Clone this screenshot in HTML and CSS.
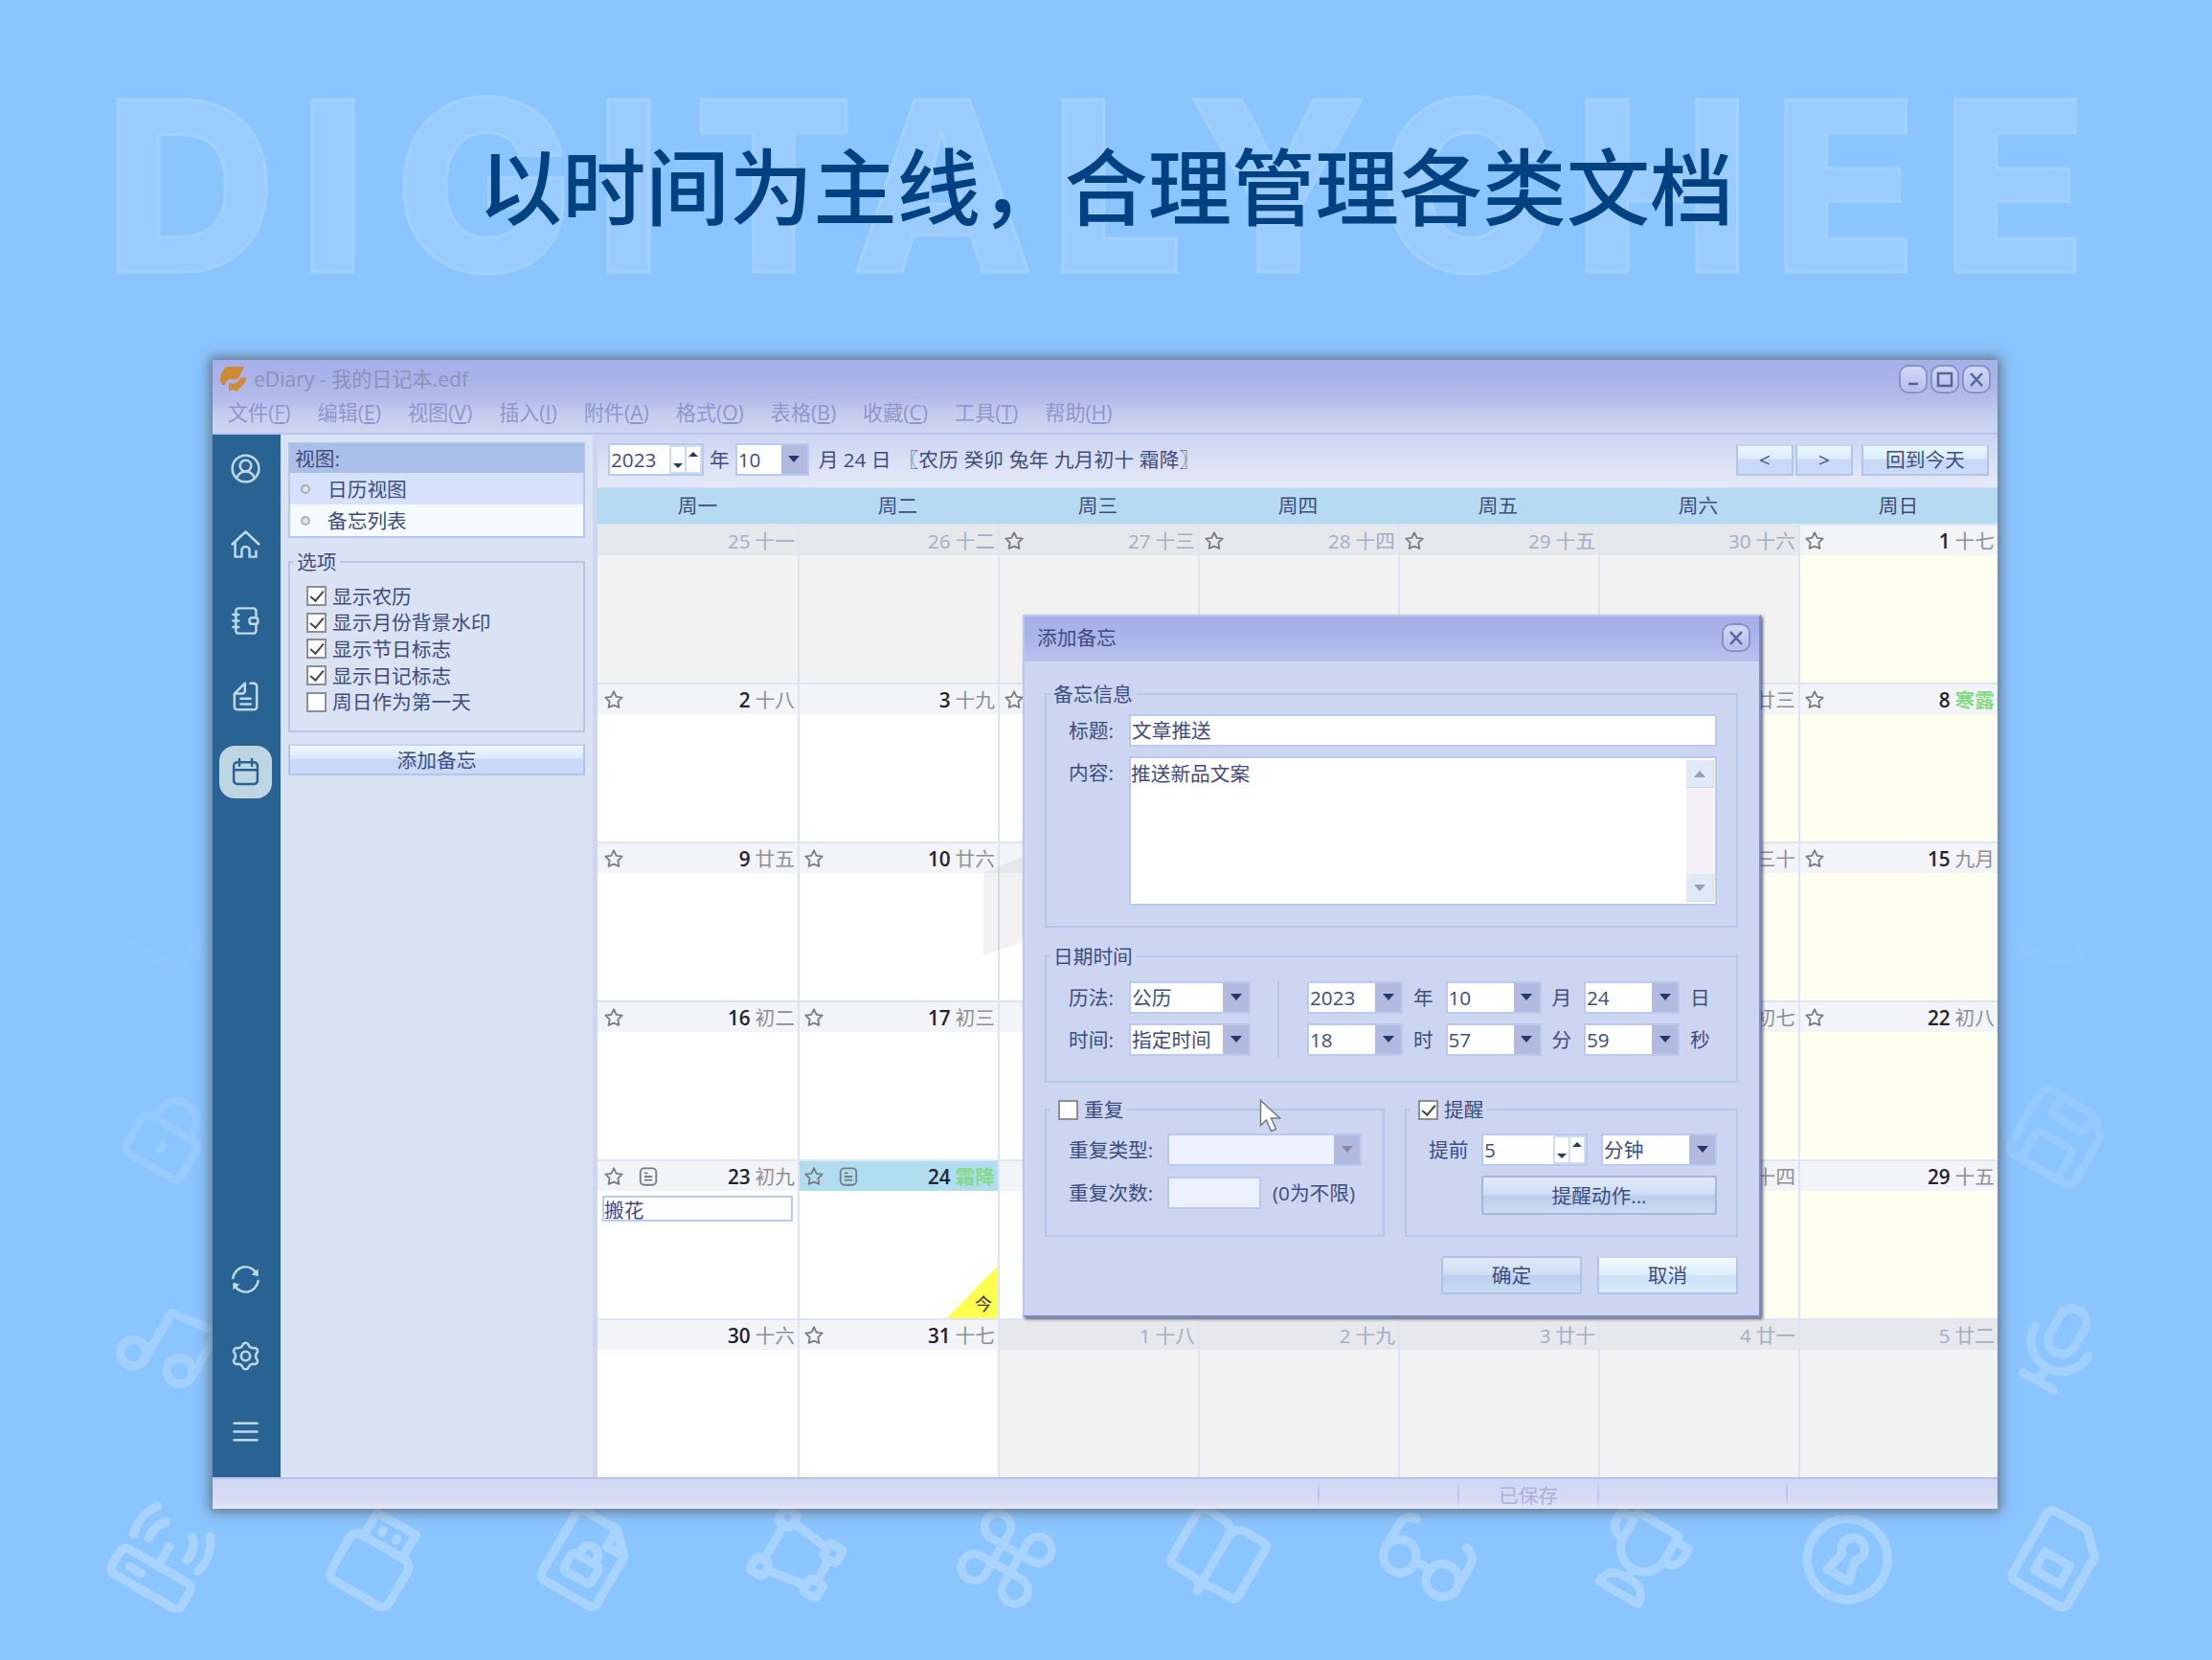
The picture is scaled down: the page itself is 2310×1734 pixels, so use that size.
FILE: index.html
```html
<!DOCTYPE html>
<html lang="zh-CN">
<head>
    <meta charset="UTF-8">
    <meta name="viewport" content="width=device-width, initial-scale=1.0">
    <title>eDiary - 我的日记本.edf</title>
    <link rel="stylesheet" href="styles.css">
</head>
<body>
    <!-- 背景大字 -->
    <svg class="backword" viewBox="0 0 2310 330" aria-hidden="true">
        <text y="284" x="109 312 412 621 724 889 1096 1241 1440 1643 1851 2028">DIGITALYCHEE</text>
    </svg>

    <!-- 背景图标 -->
    <div class="decor">
        <svg class="c1 r1" viewBox="-1 0 26 26"><rect x="4" y="5" width="16" height="15.5" rx="2"/></svg>
        <svg class="c10 r1" viewBox="0 0 24 24"><path d="M4.500 12v4.500a3 3 0 0 0 3 3c5 0 9-1 11.500-5V5"/></svg>
        <svg class="c1 r2" viewBox="-1.5 -.6 27 27"><rect x="4" y="10" width="16" height="11" rx="2"/><path d="M7 10V8a5 5 0 0 1 10 0v2M12 14.800v1.400"/></svg>
        <svg class="c10 r2" viewBox="-1 -.6 26 26"><path d="M5 3h12l4 4v12a2 2 0 0 1-2 2H5a2 2 0 0 1-2-2V5a2 2 0 0 1 2-2zM8 3v4a1 1 0 0 0 1 1h7a1 1 0 0 0 1-1V3M7 21v-7a1 1 0 0 1 1-1h8a1 1 0 0 1 1 1v7"/></svg>
        <svg class="c1 r3" viewBox="0 0 24 24"><circle cx="6" cy="16.500" r="2.900"/><circle cx="17" cy="14.800" r="2.900"/><path d="M8.900 16.500V4.500L20 3v12"/></svg>
        <svg class="c10 r3" viewBox="-.3 .4 24.5 24.5"><rect x="8.800" y="2.500" width="6.400" height="11" rx="3.200"/><path d="M5 10.500a7 7 0 0 0 14 0M12 17.500v3.500M8 21.200h8"/></svg>

        <svg class="c1 r4" viewBox=".8 -.4 24 24"><rect x="3" y="14" width="18" height="6.500" rx="1.500"/><path d="M6.500 17.300h3M12 14V9M5.200 2.500A9 9 0 0 0 3.700 10.500M8.600 4.600a5.500 5.500 0 0 0-1.500 5M18.800 2.500a9 9 0 0 1 1.500 8M15.400 4.600a5.500 5.500 0 0 1 1.500 5"/></svg>
        <svg class="c2 r4" viewBox="0 0 24 24"><rect x="4.500" y="9" width="15" height="12" rx="2"/><path d="M7 9V3h10v6M10.200 5.800v.5M13.800 5.800v.5"/></svg>
        <svg class="c3 r4" viewBox="0 0 24 24"><path d="M6.300 3H14.500l4.500 4.500V19.500a1.500 1.500 0 0 1-1.500 1.500H6.300a1.500 1.500 0 0 1-1.500-1.500V4.500A1.500 1.500 0 0 1 6.300 3zM14.500 3v4.500H19"/><rect x="8.500" y="12.300" width="7" height="4.500" rx=".8"/><path d="M10 12v-1a2 2 0 0 1 4 0v1"/></svg>
        <svg class="c4 r4" viewBox="0.2 0.2 24 24"><path d="M7.800 5.600l9 1.200M18.600 9v5M7.800 17.800l9-1.400M6 7.500v8.400"/><rect x="4.200" y="3.600" width="3.400" height="3.400" rx=".6"/><rect x="17" y="5.400" width="3.400" height="3.400" rx=".6"/><rect x="17" y="14.400" width="3.400" height="3.400" rx=".6"/><rect x="4.200" y="16.200" width="3.400" height="3.400" rx=".6"/></svg>
        <svg class="c5 r4" viewBox="-1 -1 26 26"><path d="M9.500 9.500h5v5h-5zM9.500 9.500H6.300a3.200 3.200 0 1 1 3.200-3.200zM14.500 9.500V6.300a3.200 3.200 0 1 1 3.200 3.200zM14.500 14.500h3.200a3.200 3.200 0 1 1-3.200 3.200zM9.500 14.500v3.200a3.200 3.200 0 1 1-3.200-3.200z"/></svg>
        <svg class="c6 r4" viewBox="-.4 -.2 25 25"><path d="M12 21V6.500C12 4.500 10.500 3.500 8.500 3.500H4a1 1 0 0 0-1 1V17.500a1 1 0 0 0 1 1h4.500c2 0 3.500.7 3.500 2.500 0-1.800 1.500-2.500 3.500-2.500H20a1 1 0 0 0 1-1V4.500a1 1 0 0 0-1-1h-4.500c-2 0-3.500 1-3.500 3"/></svg>
        <svg class="c7 r4" viewBox="0 0 24 24"><circle cx="6.500" cy="14.500" r="3.700"/><circle cx="17.500" cy="14.500" r="3.700"/><path d="M2.800 14.500V8.500A3 3 0 0 1 5.500 5.500M21.200 14.500V8.500A3 3 0 0 0 18.500 5.500M10.300 13.800h3.400"/></svg>
        <svg class="c8 r4" viewBox="-.9 0 25 25"><path d="M6.500 3h11v6.500a5.500 5.500 0 0 1-11 0zM6.500 4.500H3V7a3 3 0 0 0 3.500 3M17.500 4.500H21V7a3 3 0 0 1-3.500 3M12 15v2.500M6.800 21.500c0-2.500 1.700-4 4-4h2.400c2.300 0 4 1.500 4 4z"/></svg>
        <svg class="c9 r4" viewBox="-.3 0 24 24"><circle cx="12" cy="12" r="9"/><path d="M10.400 11.500a2.600 2.600 0 1 1 3.200 0l1.200 4.700H9.200z"/></svg>
        <svg class="c10 r4" viewBox="-.2 0 24 24"><path d="M6.300 3H14.500l4.500 4.500V19.500a1.500 1.500 0 0 1-1.500 1.500H6.300a1.500 1.500 0 0 1-1.500-1.500V4.500A1.500 1.500 0 0 1 6.300 3z"/><rect x="8.700" y="12" width="6.500" height="4.700"/></svg>
    </div>

    <h1>以时间为主线，合理管理各类文档</h1>

    <div class="window">
        <div class="window-head">
            <div class="titlebar">
                <svg class="logo" viewBox="0 0 28 28"><path d="M8 1h18l-6 12c-2 2-5 1-8 1-3 0-5 1-6 6L3 20C-1 15 1 6 8 1zM28 12c0 8-7 9-9 15l-5-2-4 2V18c6 2 9 0 12-5z"/></svg>
                <span class="title">eDiary - 我的日记本.edf</span>
                <div class="win-buttons">
                    <span class="win-btn"><svg viewBox="0 0 30 30"><path d="M10 20h10"/></svg></span>
                    <span class="win-btn"><svg viewBox="0 0 30 30"><path d="M8 9h14v13H8z"/></svg></span>
                    <span class="win-btn"><svg viewBox="0 0 30 30"><path d="M9 9l12 13M21 9L9 22"/></svg></span>
                </div>
            </div>
            <div class="menubar">
                <span>文件(<u>F</u>)</span>
                <span>编辑(<u>E</u>)</span>
                <span>视图(<u>V</u>)</span>
                <span>插入(<u>I</u>)</span>
                <span>附件(<u>A</u>)</span>
                <span>格式(<u>O</u>)</span>
                <span>表格(<u>B</u>)</span>
                <span>收藏(<u>C</u>)</span>
                <span>工具(<u>T</u>)</span>
                <span>帮助(<u>H</u>)</span>
            </div>
        </div>

        <div class="window-body">
            <div class="rail">
                <div class="rail-item"><svg viewBox="0 0 24 24"><circle cx="12" cy="12" r="9.500"/><circle cx="12" cy="10" r="4"/><path d="M5.500 18.500c1.500-3 4-4.500 6.500-4.500s5 1.500 6.500 4.500"/></svg></div>
                <div class="rail-item"><svg viewBox="0 0 24 24"><path d="M2.500 12L12 3l9.500 9M4.500 10.500V21h4.700v-4.500a2.800 2.800 0 0 1 5.600 0V21h4.700v-4"/></svg></div>
                <div class="rail-item"><svg viewBox="0 0 24 24"><path d="M19.500 9V5a2 2 0 0 0-2-2H7a2 2 0 0 0-2 2v14a2 2 0 0 0 2 2h10.500a2 2 0 0 0 2-2v-4M3 7.500h4M3 12h4M3 16.500h4"/><rect x="14.800" y="9.700" width="6" height="4.600" rx="1.800"/></svg></div>
                <div class="rail-item"><svg viewBox="0 0 24 24"><path d="M15.500 2.500h2.300a2.200 2.200 0 0 1 2.200 2.200v14.600a2.200 2.200 0 0 1-2.200 2.200H6.200A2.200 2.200 0 0 1 4 19.300V10l7.500-7.500V8a2 2 0 0 1-2 2H4M8.500 13.500h7M8.500 17.500h7"/></svg></div>
                <div class="rail-item active"><svg viewBox="0 0 24 24"><rect x="3.500" y="5" width="17" height="15.500" rx="2.500"/><path d="M3.500 10.500h17M7.500 2.800v4.500M16.500 2.800v4.500"/></svg></div>
                <div class="rail-space"></div>
                <div class="rail-item"><svg viewBox="0 0 24 24"><path d="M3 11a9 9 0 0 1 17-3M21 13a9 9 0 0 1-17 3"/><path class="solid" d="M21 4.500v5.300l-4.800-1.300zM3 19.500v-5.300l4.800 1.300z"/></svg></div>
                <div class="rail-item"><svg viewBox="0 0 24 24"><circle cx="12" cy="12" r="3.200"/><path d="M10.300 3.300a2.200 2.200 0 0 1 3.400 0Q15 6.800 18.700 6.200a2.200 2.200 0 0 1 1.700 2.900Q18 12 20.400 14.900a2.200 2.200 0 0 1-1.700 2.900Q15 17.200 13.700 20.700a2.200 2.200 0 0 1-3.400 0Q9 17.200 5.300 17.800a2.200 2.200 0 0 1-1.700-2.900Q6 12 3.600 9.100a2.200 2.200 0 0 1 1.700-2.900Q9 6.800 10.300 3.300z"/></svg></div>
                <div class="rail-item"><svg viewBox="0 0 24 24"><path d="M3.800 6h16.400M3.800 12h16.400M3.800 18h16.400"/></svg></div>
            </div>

            <div class="sidebar">
                <div class="view-list">
                    <div class="view-title">视图:</div>
                    <div class="view-item selected"><i></i>日历视图</div>
                    <div class="view-item"><i></i>备忘列表</div>
                </div>
                <fieldset class="options">
                    <legend>选项</legend>
                    <div class="check"><span class="box on"></span>显示农历</div>
                    <div class="check"><span class="box on"></span>显示月份背景水印</div>
                    <div class="check"><span class="box on"></span>显示节日标志</div>
                    <div class="check"><span class="box on"></span>显示日记标志</div>
                    <div class="check"><span class="box"></span>周日作为第一天</div>
                </fieldset>
                <div class="btn">添加备忘</div>
            </div>

            <div class="main">
                <div class="toolbar">
                    <div class="spin w-year"><span>2023</span><b><i class="down"></i><i class="up"></i></b></div>
                    <span class="unit-year">年</span>
                    <div class="combo w-month"><span>10</span><b></b></div>
                    <span class="date-text">月 24 日</span>
                    <span class="lunar-text">〖农历 癸卯 兔年 九月初十 霜降〗</span>
                    <div class="nav">
                        <div class="btn">&lt;</div>
                        <div class="btn">&gt;</div>
                        <div class="btn today-btn">回到今天</div>
                    </div>
                </div>
                <div class="weekdays">
                    <span>周一</span><span>周二</span><span>周三</span><span>周四</span><span>周五</span><span>周六</span><span>周日</span>
                </div>
                <div class="days" id="days"></div>
                <!-- 月份水印 -->
                <svg class="watermark" viewBox="0 0 60 104"><path d="M0 17L60-8V81L0 104z"/></svg>
            </div>
        </div>

        <div class="statusbar">
            <span class="s1"></span><span class="s2"></span><span class="s3">已保存</span><span class="s4"></span><span class="s5"></span>
        </div>

        <!-- 添加备忘对话框 -->
        <div class="dialog">
            <div class="dialog-title">
                <span>添加备忘</span>
                <span class="win-btn"><svg viewBox="0 0 30 30"><path d="M9 9l12 13M21 9L9 22"/></svg></span>
            </div>
            <div class="dialog-body">
                <fieldset class="info">
                    <legend>备忘信息</legend>
                    <div class="row"><label>标题:</label><div class="text-input">文章推送</div></div>
                    <div class="row top"><label>内容:</label>
                        <div class="textarea"><span>推送新品文案</span>
                            <div class="scroll"><b class="up"></b><b class="down"></b></div>
                        </div>
                    </div>
                </fieldset>
                <fieldset class="datetime">
                    <legend>日期时间</legend>
                    <div class="kind">
                        <div class="row"><label>历法:</label><div class="combo w-kind"><span>公历</span><b></b></div></div>
                        <div class="row"><label>时间:</label><div class="combo w-kind"><span>指定时间</span><b></b></div></div>
                    </div>
                    <div class="values">
                        <div class="combo"><span>2023</span><b></b></div><em>年</em>
                        <div class="combo"><span>10</span><b></b></div><em>月</em>
                        <div class="combo"><span>24</span><b></b></div><em>日</em>
                        <div class="combo"><span>18</span><b></b></div><em>时</em>
                        <div class="combo"><span>57</span><b></b></div><em>分</em>
                        <div class="combo"><span>59</span><b></b></div><em>秒</em>
                    </div>
                </fieldset>
                <div class="pair">
                    <fieldset class="repeat">
                        <legend><span class="box"></span>重复</legend>
                        <div class="row"><label>重复类型:</label><div class="combo disabled w-type"><span></span><b></b></div></div>
                        <div class="row"><label>重复次数:</label><div class="text-input disabled w-times"></div><span class="hint">(0为不限)</span></div>
                    </fieldset>
                    <fieldset class="remind">
                        <legend><span class="box on"></span>提醒</legend>
                        <div class="row"><label>提前</label><div class="spin w-ahead"><span>5</span><b><i class="down"></i><i class="up"></i></b></div><div class="combo w-unit"><span>分钟</span><b></b></div></div>
                        <div class="btn action">提醒动作...</div>
                    </fieldset>
                </div>
                <div class="dialog-buttons">
                    <div class="btn ok">确定</div>
                    <div class="btn cancel">取消</div>
                </div>
            </div>
            <svg class="cursor" viewBox="0 0 24 36"><path d="M1.500 1.500v26l6-5.500 5 11.500 5-2-5-11.500h9z"/></svg>
        </div>
    </div>

    <script>
        // 每个格子: 日期, 农历, 标志 (s - 星标, n - 日记, x - 非本月, w - 周末, t - 今天, g - 节气)
        const days = [
            [25, "十一", "x"], [26, "十二", "x"], [27, "十三", "xs"], [28, "十四", "xs"], [29, "十五", "xs"], [30, "十六", "x"], [1, "十七", "ws"],
            [2, "十八", "s"], [3, "十九", ""], ["", "", "s"], ["", "", ""], ["", "", ""], ["", "廿三", "w"], [8, "寒露", "wsg"],
            [9, "廿五", "s"], [10, "廿六", "s"], ["", "", ""], ["", "", ""], ["", "", ""], ["", "三十", "w"], [15, "九月", "ws"],
            [16, "初二", "s"], [17, "初三", "s"], ["", "", ""], ["", "", ""], ["", "", ""], ["", "初七", "w"], [22, "初八", "ws"],
            [23, "初九", "sn"], [24, "霜降", "sntg"], ["", "", ""], ["", "", ""], ["", "", ""], ["", "十四", "w"], [29, "十五", "w"],
            [30, "十六", ""], [31, "十七", "s"], [1, "十八", "x"], [2, "十九", "x"], [3, "廿十", "x"], [4, "廿一", "x"], [5, "廿二", "x"]
        ];
        const memos = { 28: "搬花" };
        const star = '<svg viewBox="0 0 24 24"><path d="M12 2.500l2.900 6 6.600.9-4.800 4.600 1.200 6.600-5.900-2.400-5.900 2.400 1.200-6.600L2.500 9.400l6.600-.9z"/></svg>';
        const note = '<svg class="note" viewBox="0 0 24 24"><rect x="3" y="2.500" width="18" height="19" rx="4.500"/><path d="M7.500 8h4M7.500 12h9M7.500 16h9"/></svg>';

        document.getElementById("days").innerHTML = days.map(function (d, i) {
            const f = d[2];
            let cls = "day";
            if (f.includes("x")) cls += " other";
            if (f.includes("w")) cls += " weekend";
            if (f.includes("t")) cls += " today";
            if (f.includes("g")) cls += " term";
            return '<div class="' + cls + '"><div class="day-head">' +
                (f.includes("s") ? star : "") + (f.includes("n") ? note : "") +
                '<span class="num">' + d[0] + '</span><span class="lunar">' + d[1] + '</span></div>' +
                (memos[i] ? '<div class="memo">' + memos[i] + '</div>' : "") +
                (f.includes("t") ? '<div class="corner">今</div>' : "") + '</div>';
        }).join("");
    </script>
</body>
</html>
```
FILE: styles.css
```css
* {
    box-sizing: border-box;
}
body {
    margin: 0;
    width: 2310px;
    height: 1734px;
    position: relative;
    overflow: hidden;
    background: #8bc5ff;
    font-family: "Open Sans", "Noto Sans CJK SC", sans-serif;
    font-size: 20.7px;
    line-height: 28px;
    color: #3f4d7d;
    white-space: nowrap;
}
h1 {
    margin: 0;
    padding-top: 128px;
    height: 376px;
    text-align: center;
    font-family: "Noto Sans CJK SC", sans-serif;
    font-size: 87.400px;
    font-weight: 500;
    line-height: 126px;
    color: #004182;
    position: relative;
}

/* background */
.backword {
    position: absolute;
    left: 0;
    top: 0;
    width: 2310px;
    height: 330px;
}
.backword text {
    font-family: Inter, sans-serif;
    font-weight: 800;
    font-size: 248px;
    fill: #9accff;
    stroke: #a3d1ff;
    stroke-width: 3px;
}
.decor {
    position: absolute;
    left: 88px;
    top: 914px;
    padding: 0 30px;
    display: grid;
    grid-template-columns: repeat(10, 112px);
    grid-template-rows: repeat(4, 112px);
    gap: 107.300px;
    -webkit-mask-image: linear-gradient(transparent 7.500%, rgba(0, 0, 0, .1) 7.600%, rgba(0, 0, 0, .4) 36%, rgba(0, 0, 0, .75) 64%, #000 86%);
    mask-image: linear-gradient(transparent 7.500%, rgba(0, 0, 0, .1) 7.600%, rgba(0, 0, 0, .4) 36%, rgba(0, 0, 0, .75) 64%, #000 86%);
}
.decor svg {
    width: 112px;
    height: 112px;
    overflow: visible;
    transform: rotate(30deg);
    fill: none;
    stroke: #a8d3ff;
    stroke-width: 2;
    stroke-linecap: round;
    stroke-linejoin: round;
}
.c1 { grid-column: 1; }
.c2 { grid-column: 2; }
.c3 { grid-column: 3; }
.c4 { grid-column: 4; }
.c5 { grid-column: 5; }
.c6 { grid-column: 6; }
.c7 { grid-column: 7; }
.c8 { grid-column: 8; }
.c9 { grid-column: 9; }
.c10 { grid-column: 10; }
.r1 { grid-row: 1; }
.r2 { grid-row: 2; }
.r3 { grid-row: 3; }
.r4 { grid-row: 4; }

/* window */
.window {
    position: relative;
    width: 1864px;
    height: 1200px;
    margin-left: 222px;
    display: flex;
    flex-direction: column;
    background: #ccd6f1;
    box-shadow: 0 0 12px 3px rgba(80, 80, 80, .7);
}
.window-head {
    flex: none;
    height: 78px;
    border-bottom: 2px solid #b3c3ec;
    background: linear-gradient(#a6afe8 0, #a9b3e9 25%, #b4bdeb 55%, #c5ceee 75%, #cdd6f1 100%);
}
.titlebar {
    height: 40px;
    padding: 0 7px 0 7px;
    display: flex;
    align-items: center;
}
.logo {
    width: 28px;
    height: 28px;
    fill: #d08a36;
}
.title {
    flex: 1;
    margin-left: 8px;
    font-size: 21.100px;
    color: #8d94b8;
}
.win-buttons {
    display: flex;
    gap: 3px;
}
.win-btn {
    width: 30px;
    height: 30px;
    border: 2px solid #8791cb;
    border-radius: 10px;
    background: linear-gradient(#d3daf5, #b4bdea);
    box-shadow: inset 0 0 0 1px #c9d1f2;
}
.win-btn svg {
    display: block;
    margin: -2px;
    width: 30px;
    height: 30px;
    fill: none;
    stroke: #56639f;
    stroke-width: 2.500;
}
.menubar {
    display: flex;
    gap: 28px;
    padding-left: 16px;
    line-height: 30px;
    font-size: 21.100px;
    color: #8f97cd;
}
.window-body {
    flex: none;
    height: 1089px;
    display: flex;
}

/* left rail */
.rail {
    width: 71px;
    background: #296394;
    display: flex;
    flex-direction: column;
    align-items: center;
    gap: 24.300px;
    padding: 8px 2px 20px 0;
}
.rail-item {
    width: 55px;
    height: 55px;
    border-radius: 16px;
    display: flex;
    align-items: center;
    justify-content: center;
}
.rail-item svg {
    width: 35px;
    height: 35px;
    fill: none;
    stroke: #c0d9e8;
    stroke-width: 1.700;
    stroke-linecap: round;
    stroke-linejoin: round;
}
.rail-item .solid {
    fill: #c0d9e8;
    stroke: none;
}
.rail-item.active {
    background: #bed5e2;
}
.rail-item.active svg {
    stroke: #296394;
}
.rail-space {
    flex: 1;
}

/* sidebar */
.sidebar {
    width: 331px;
    padding: 8px 8px 0 8px;
    background: #dae3f3;
    border-right: 5px solid #ccd6f1;
}
.view-list {
    height: 100px;
    border: 2px solid #b3c6ec;
    background: #f6fbff;
}
.view-title {
    height: 31px;
    margin: -1px -1px 0;
    padding-left: 6px;
    background: #a9bee9;
    line-height: 33px;
}
.view-item {
    height: 33px;
    display: flex;
    align-items: center;
    padding-left: 11px;
}
.view-item.selected {
    background: #d6e2fb;
}
.view-item i {
    width: 10px;
    height: 10px;
    margin-right: 18px;
    border-radius: 50%;
    border: 2px solid #a9afb9;
    background: #e2e4e8;
}
fieldset {
    margin: 0;
    border: 2px solid #b5c6ed;
    min-width: 0;
}
legend {
    padding: 0 4px;
    height: 28px;
}
.options {
    height: 192px;
    margin-top: 11px;
    padding: 8px 0 0 17px;
}
.options legend {
    margin-left: -14px;
}
.check {
    display: flex;
    align-items: center;
    height: 27.600px;
}
.box {
    display: inline-block;
    width: 21px;
    height: 21px;
    border: 2px solid #8e8e93;
    background: #fff;
    margin-right: 6px;
    position: relative;
}
.box.on::after {
    content: "";
    position: absolute;
    left: 5px;
    top: 0;
    width: 6px;
    height: 12px;
    border: solid #444;
    border-width: 0 2px 2px 0;
    transform: rotate(40deg);
}
.btn {
    height: 33px;
    display: flex;
    align-items: center;
    justify-content: center;
    border: 2px solid #b3c3ec;
    border-top-color: #c6d4f4;
    background: linear-gradient(#eaf6ff 0, #dcebfd 45%, #c8d8f6 50%, #c9dafb 100%);
}
.sidebar .btn {
    margin-top: 12px;
}

/* calendar */
.main {
    position: relative;
    width: 1462px;
    overflow: hidden;
}
.toolbar {
    height: 55px;
    display: flex;
    align-items: center;
    padding: 0 9px 3px 11px;
    background: linear-gradient(#ccd6f1, #e6eaf8);
}
.spin,
.combo {
    height: 34px;
    display: flex;
    align-items: center;
    border: 2px solid #b8caf0;
    background: #fff;
    padding-left: 1px;
}
.spin span,
.combo span {
    flex: 1;
}
.spin b {
    width: 34px;
    height: 100%;
    display: flex;
    border: 2px solid #cfdcf5;
}
.spin i {
    flex: 1;
    display: flex;
    justify-content: center;
}
.spin i + i {
    border-left: 2px solid #cfdcf5;
}
.spin i::after {
    content: "";
    width: 0;
    height: 0;
    border: 5px solid transparent;
    margin-top: 17px;
    border-top-color: #24396b;
}
.spin i.up::after {
    margin-top: 0;
    border-top-color: transparent;
    border-bottom-color: #24396b;
}
.combo b {
    width: 27px;
    height: 100%;
    background: #b3badf;
    display: flex;
    justify-content: center;
}
.combo b::after {
    content: "";
    width: 0;
    height: 0;
    margin-top: 11px;
    border: 6px solid transparent;
    border-top: 7px solid #24396b;
}
.w-year {
    width: 100px;
}
.unit-year {
    margin: 0 6px;
}
.w-month {
    width: 77px;
}
.date-text {
    margin-left: 10px;
}
.lunar-text {
    margin-left: 8px;
    letter-spacing: .15px;
}
.nav {
    margin-left: auto;
    display: flex;
}
.nav .btn {
    width: 60px;
    margin-right: 2px;
}
.nav .today-btn {
    width: 133px;
    margin: 0 0 0 7px;
}
.weekdays {
    height: 38px;
    display: grid;
    grid-template-columns: repeat(7, 209px);
    text-align: center;
    line-height: 37px;
    background: #b7daf3;
    border-top: 1px solid #cfe0f6;
}
.days {
    display: grid;
    grid-template-columns: repeat(6, 209px) 208px;
    grid-template-rows: repeat(6, 166px);
    background: #fff;
}
.day {
    position: relative;
    border-left: 2px solid #dde5f4;
    border-top: 2px solid #dfe5f4;
    background: #fff;
}
.day:nth-child(7n + 1) {
    border-left: none;
    padding-left: 2px;
}
.day-head {
    height: 31px;
    display: flex;
    align-items: center;
    padding: 0 3px 0 4px;
    background: #f3f4f8;
}
.day:nth-child(7n + 1) .day-head {
    margin-left: -2px;
    padding-left: 6px;
}
.day-head svg {
    width: 22px;
    height: 22px;
    margin-right: 14px;
    fill: none;
    stroke: #7b7b80;
    stroke-width: 2;
    stroke-linejoin: round;
}
.num {
    margin-left: auto;
    margin-right: 5px;
    color: #23232d;
    font-weight: 600;
}
.lunar {
    color: #8f9094;
}
.weekend {
    background: #fffff0;
}
.other {
    background: #f2f2f2;
}
.other .day-head {
    background: #e7e8ec;
}
.other .num,
.other .lunar {
    color: #a5afc6;
    font-weight: 400;
}
.today .day-head {
    background: #b1ddf1;
}
.term .lunar {
    color: #86d986;
    font-weight: 700;
}
.memo {
    width: 199px;
    height: 27px;
    margin: 5px 0 0 3px;
    border: 2px solid #bacbee;
    line-height: 26px;
}
.corner {
    position: absolute;
    right: 0;
    bottom: 0;
    width: 54px;
    height: 54px;
    padding: 26px 6px 0 0;
    text-align: right;
    font-size: 18px;
    line-height: 26px;
    color: #333;
    background: linear-gradient(135deg, transparent 50%, #ffff4f 50%);
}
.watermark {
    position: absolute;
    left: 403px;
    top: 441px;
    width: 60px;
    height: 104px;
    fill: rgba(0, 0, 0, .05);
}

/* status bar */
.statusbar {
    flex: 1;
    display: flex;
    border-top: 2px solid #b6c3ec;
    background: linear-gradient(#cfd8f2, #d8dbf4 75%, #e6e9f6);
    color: #a9b1dc;
    line-height: 35px;
    min-height: 0;
}
.statusbar span {
    height: 31px;
    text-align: center;
    border-right: 2px solid;
    border-image: linear-gradient(transparent 10%, #b3c4ee 50%, transparent 95%) 1;
}
.s1 { width: 1156px; }
.s2 { width: 146px; }
.s3 { width: 146px; }
.s4 { width: 197px; }
.statusbar .s5 { border: none; }

/* dialog */
.dialog {
    position: absolute;
    left: 846px;
    top: 266px;
    width: 771px;
    height: 734px;
    border: 2px solid #bcc7ec;
    border-right-color: #7f8bc9;
    border-bottom-color: #7f8bc9;
    background: #ccd6f1;
    box-shadow: 2px 2px 3px rgba(40, 40, 60, .7);
}
.dialog-title {
    height: 47px;
    padding: 0 9px 3px 13px;
    display: flex;
    align-items: center;
    justify-content: space-between;
    background: linear-gradient(#a6afe8, #a9b3e9 40%, #bac3ee);
}
.dialog-body {
    padding: 20px 22px 0 21px;
}
.row {
    display: flex;
    align-items: center;
}
.row.top {
    align-items: flex-start;
}
.row label {
    width: 63px;
}
.text-input,
.textarea {
    width: 614px;
    height: 34px;
    border: 2px solid #b8caf0;
    background: #fff;
    padding-left: 1px;
    line-height: 31px;
}
.info {
    height: 258px;
    padding: 7px 0 0 23px;
}
.dialog legend {
    margin-left: -20px;
}
.info .row + .row {
    margin-top: 10px;
}
.info .top label {
    line-height: 34px;
}
.textarea {
    height: 156px;
    display: flex;
    justify-content: space-between;
    padding: 2px 0 2px 0;
    line-height: 28px;
}
.scroll {
    width: 29px;
    margin-right: 1px;
    background: #f3f0f7;
    display: flex;
    flex-direction: column;
    justify-content: space-between;
}
.scroll b {
    height: 29px;
    background: #dfe9f7;
    border: 1px solid #c8d8f0;
    border-width: 0 1px 1px 0;
    display: flex;
    justify-content: center;
}
.scroll b::after {
    content: "";
    width: 0;
    height: 0;
    margin-top: 5px;
    border: 6px solid transparent;
    border-bottom: 7px solid #97a1b8;
}
.scroll .down::after {
    margin-top: 11px;
    border-bottom-color: transparent;
    border-top: 7px solid #97a1b8;
}
.datetime {
    height: 146px;
    margin-top: 16px;
    padding: 12px 0 0 23px;
}
.kind {
    float: left;
    width: 220px;
    height: 79px;
    border-right: 2px solid #b3c6ec;
}
.kind .row + .row {
    margin-top: 10px;
}
.w-kind {
    width: 127px;
}
.values {
    margin-left: 249px;
    display: grid;
    grid-template-columns: 100px 44.500px 100px 44.500px 100px 40px;
    row-gap: 10px;
    align-items: center;
}
.values em {
    font-style: normal;
    padding-left: 11px;
}
.pair {
    display: flex;
    justify-content: space-between;
    margin-top: 14px;
}
.pair fieldset {
    height: 147px;
    padding: 11px 0 0 23px;
}
.pair legend {
    display: flex;
    align-items: center;
    padding-left: 9px;
}
.repeat {
    width: 355px;
}
.repeat .row label {
    width: 103px;
}
.repeat .row + .row {
    margin-top: 11px;
}
.w-type {
    width: 203px;
}
.w-times {
    width: 98px;
}
.disabled {
    background: #edf0fd;
}
.combo.disabled b::after {
    border-top-color: #888b96;
}
.hint {
    margin-left: 12px;
}
.remind {
    width: 348px;
}
.remind .row label {
    width: 55px;
}
.w-ahead {
    width: 111px;
}
.w-unit {
    width: 121px;
    margin-left: 14px;
}
.action,
.ok {
    background: linear-gradient(#dfe9f9 0, #d0def4 48%, #b9cfec 52%, #c9dcf5 100%);
    border: 2px solid #a3b6dd;
    border-radius: 3px;
}
.action {
    width: 246px;
    height: 41px;
    margin: 10px 0 0 55px;
}
.dialog-buttons {
    display: flex;
    justify-content: flex-end;
    gap: 16px;
    margin-top: 20px;
}
.dialog-buttons .btn {
    width: 147px;
    height: 40px;
}
.ok {
    border-color: #b0c4ea;
}
.cancel {
    background: linear-gradient(#eefaff 0, #e0effc 48%, #cbe2f7 52%, #d5ebfc 100%);
}
.cursor {
    position: absolute;
    left: 245px;
    top: 504px;
    width: 24px;
    height: 36px;
    fill: #fff;
    stroke: #77777f;
    stroke-width: 1.500;
}
```
